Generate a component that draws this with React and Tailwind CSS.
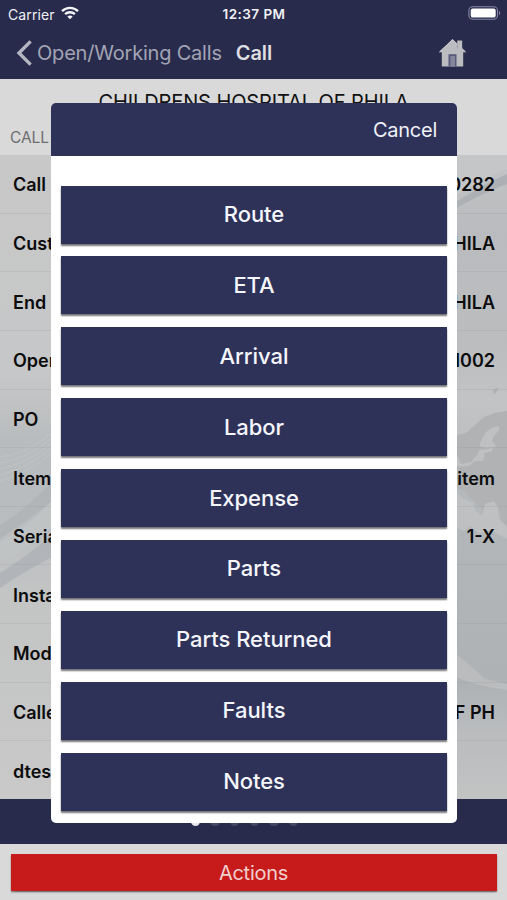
import React, { useState } from 'react'

const detalhes = [
  { label: 'Call No', value: '10282' },
  { label: 'Customer', value: 'OF PHILA' },
  { label: 'End User', value: 'OF PHILA' },
  { label: 'Opened', value: '11002' },
  { label: 'PO', value: '' },
  { label: 'Item', value: 'item' },
  { label: 'Serial', value: '1-X' },
  { label: 'Installed', value: '' },
  { label: 'Model', value: '' },
  { label: 'Caller', value: 'OF PH' },
  { label: 'dtest', value: '' },
]

const actions = ['Route', 'ETA', 'Arrival', 'Labor', 'Expense', 'Parts', 'Parts Returned', 'Faults', 'Notes']

function StatusBar() {
  return (
    <div className="flex h-[28px] items-center justify-between pl-[8px] pr-[6px] text-[13px] text-[#f1f1f5]">
      <div className="flex flex-1 items-center gap-[6px]">
        <span className="text-[14px] tracking-[0.1px]">Carrier</span>
        <svg className="-mt-[2px]" width="18" height="14" viewBox="0 0 18 14" fill="none" stroke="#f5f5f8" strokeWidth="2.3">
          <path d="M1 5.2C5.6 0.8 12.4 0.8 17 5.2" />
          <path d="M4.1 8.2C6.9 5.6 11.1 5.6 13.9 8.2" />
          <path d="M9 13.2L6.3 10.5C7.8 9.1 10.2 9.1 11.7 10.5Z" fill="#f5f5f8" stroke="none" />
        </svg>
      </div>
      <span className="mr-[-3px] text-[13.5px] font-semibold tracking-[0.45px] -translate-x-[2px]">12:37 PM</span>
      <div className="flex flex-1 justify-end">
        <svg className="-mt-[2px]" width="33" height="14" viewBox="0 0 33 14" fill="none">
          <rect x="0.9" y="0.7" width="28.6" height="12.6" rx="3.8" stroke="#8788a3" strokeWidth="1.1" />
          <rect x="2.7" y="2.4" width="25" height="9.2" rx="2.2" fill="#fff" />
          <path d="M31 4.8C32.6 5.6 32.6 8.4 31 9.2Z" fill="#8788a3" />
        </svg>
      </div>
    </div>
  )
}

function NavBar() {
  return (
    <div className="flex h-[49px] items-center pl-4 pr-[41px]">
      <svg width="16" height="26" viewBox="0 0 16 26" fill="none" stroke="#b5b6c2" strokeWidth="3.4">
        <path d="M14.6 1.4L3 13L14.6 24.6" />
      </svg>
      <span className="ml-[5px] text-[20px] tracking-[-0.2px] text-[#a3a4b4]">Open/Working Calls</span>
      <h1 className="ml-[14px] text-[20px] font-semibold tracking-[-0.1px] text-[#dedee3]">Call</h1>
      <svg className="ml-auto" width="27" height="28" viewBox="0 0 27 28">
        <path d="M13.5 0L18.2 4.5V1.6H23.2V9.4L27 13.2H24.2V27.6H2.8V13.2H0Z" fill="#bbbcc0" />
        <path d="M0.5 12.8L13.5 1L26.5 12.8" fill="none" stroke="#c9c9cd" strokeWidth="1" />
        <path d="M18.4 4.5V9.2" fill="none" stroke="#9495a5" strokeWidth="0.8" />
        <rect x="9.5" y="15.2" width="8" height="12.4" fill="#595b7b" />
        <rect x="11.4" y="17" width="4.6" height="10.6" fill="#85869b" />
      </svg>
    </div>
  )
}

// faded world map artwork behind the list
function MapBackground() {
  return (
    <svg className="absolute inset-0" width="507" height="644" viewBox="0 0 507 644" preserveAspectRatio="none">
      <defs>
        <linearGradient id="left" x1="0" y1="0" x2="0" y2="1">
          <stop offset="0" stopColor="#c8c8c8" />
          <stop offset="0.34" stopColor="#c6c7c8" />
          <stop offset="0.44" stopColor="#b9bcbe" />
          <stop offset="0.56" stopColor="#b9bcbf" />
          <stop offset="0.68" stopColor="#c3c4c4" />
          <stop offset="1" stopColor="#c9c9c9" />
        </linearGradient>
        <linearGradient id="right" x1="0" y1="0" x2="0" y2="1">
          <stop offset="0" stopColor="#c3c4c5" />
          <stop offset="0.12" stopColor="#b9bbbe" />
          <stop offset="0.3" stopColor="#bbbdbf" />
          <stop offset="0.38" stopColor="#c2c3c4" />
          <stop offset="0.58" stopColor="#b2b6b9" />
          <stop offset="0.82" stopColor="#aeb2b5" />
          <stop offset="0.9" stopColor="#babcbe" />
          <stop offset="1" stopColor="#c2c3c3" />
        </linearGradient>
      </defs>
      <rect width="254" height="644" fill="url(#left)" />
      <rect x="254" width="253" height="644" fill="url(#right)" />
      <g fill="none" stroke="#c1c4c6" strokeWidth="0.8">
        <path d="M0 302Q28 299 54 276" />
        <path d="M0 308Q28 304 54 281" />
        <path d="M0 314Q28 309 54 286" />
        <path d="M0 320Q28 314 54 291" />
        <path d="M0 326Q28 319 54 296" />
      </g>
      <path d="M0 370Q30 352 60 318V340Q32 362 0 384Z" fill="#b1b5b8" />
      <path d="M0 387Q32 370 60 336V364Q32 392 0 408Z" fill="#c0c3c4" />
      <path d="M0 418Q30 400 60 372V398Q28 414 0 433Z" fill="#b1b5ba" />
      <path d="M450 51Q480 31 507 19V29Q478 40 450 57Z" fill="#adb0b4" />
      <path d="M507 0V14Q480 24 450 45V0Z" fill="#c5c6c7" />
      <g fill="#b0b2b4">
        <path d="M493 235L499 232L497 236L494 240Z" />
        <path d="M450 282L466 278L474 271L484 262L495 258L507 256V364L496 352L488 350L484 356L474 346L464 336L450 330Z" />
        <path d="M501 354L507 350V374L500 368Z" />
      </g>
      <g fill="#bfc0c1">
        <path d="M480 288L485 278L491 273L499 271L499 275L494 281L492 286L496 291L487 293L480 292Z" />
        <path d="M450 298L458 302L461 309L471 307L477 300L479 295L489 294L494 291L492 296L485 298L483 306L475 306L469 311L450 312Z" />
        <path d="M450 335L458 338L462 343L473 348L476 356L482 361L485 349L494 346L498 352L499 363L507 372V384L490 375L480 379L470 371L464 376L450 370Z" />
      </g>
      <path d="M450 494Q468 508 485 524L507 529V535Q478 532 450 520Z" fill="#babcbe" />
    </svg>
  )
}

function App() {
  const [aberto, setAberto] = useState(true)
  const [page, setPage] = useState(0)

  return (
    <div className="relative flex h-[900px] w-[507px] flex-col overflow-hidden bg-[#d9d9d9] font-['Inter','Liberation_Sans',sans-serif]">
      <header className="h-[79px] shrink-0 bg-[#282b4c]">
        <StatusBar />
        <NavBar />
      </header>

      <div className="h-[76px] shrink-0 overflow-hidden pt-[11px]">
        <h2 className="text-center text-[20px] leading-6 tracking-[-0.1px] text-[#111]">CHILDRENS HOSPITAL OF PHILA</h2>
        <p className="mt-[14px] pl-[10px] text-[15.5px] leading-5 tracking-[-0.1px] text-[#6d6d70]">CALL</p>
      </div>

      <main className="relative h-[643.5px] shrink-0 overflow-hidden">
        <MapBackground />
        <div className="relative">
          {detalhes.map((item) => (
            <div
              key={item.label}
              className="flex h-[58.65px] items-center justify-between border-b border-[#90909033] pl-[13px] pr-3 pt-[2px] text-[18px] font-semibold text-[#0c0c0d]"
            >
              <span>{item.label}</span>
              <span>{item.value}</span>
            </div>
          ))}
        </div>
      </main>

      <div className="flex h-[45.5px] shrink-0 items-center justify-center gap-[10.1px] bg-[#282b4c] pr-[18px]">
        {[0, 1, 2, 3, 4, 5].map((i) => (
          <button
            key={i}
            className={`size-[9.5px] rounded-full ${page === i ? 'bg-[#e8e8ec]' : 'bg-[#464963]'}`}
            onClick={() => setPage(i)}
          />
        ))}
      </div>

      <footer className="flex-1 px-[10.5px] pt-[10px]">
        <button
          className="h-[36.5px] w-full bg-[#c71b1b] pt-[1px] text-[20px] tracking-[-0.25px] text-[#f0cfcf] shadow-[0_1.5px_1.5px_#777]"
          onClick={() => setAberto(true)}
        >
          Actions
        </button>
      </footer>

      {aberto && (
        <div className="absolute left-[51px] top-[102.5px] flex h-[720.5px] w-[406px] flex-col overflow-hidden rounded-[5px] bg-white">
          <div className="flex h-[53px] shrink-0 items-center justify-end bg-[#2e3259] pr-[20px] pt-[1px]">
            <button className="text-[20px] tracking-[-0.25px] text-[#f0f1f8]" onClick={() => setAberto(false)}>
              Cancel
            </button>
          </div>
          <div className="flex flex-col gap-[12.9px] px-[10px] pt-[30px]">
            {actions.map((action) => (
              <button
                key={action}
                className="h-[58px] bg-[#2e3259] text-[22px] font-medium tracking-[-0.05px] text-[#f5f6fc] shadow-[0_2px_1.5px_#77777c]"
              >
                {action}
              </button>
            ))}
          </div>
        </div>
      )}
    </div>
  )
}

export default App
